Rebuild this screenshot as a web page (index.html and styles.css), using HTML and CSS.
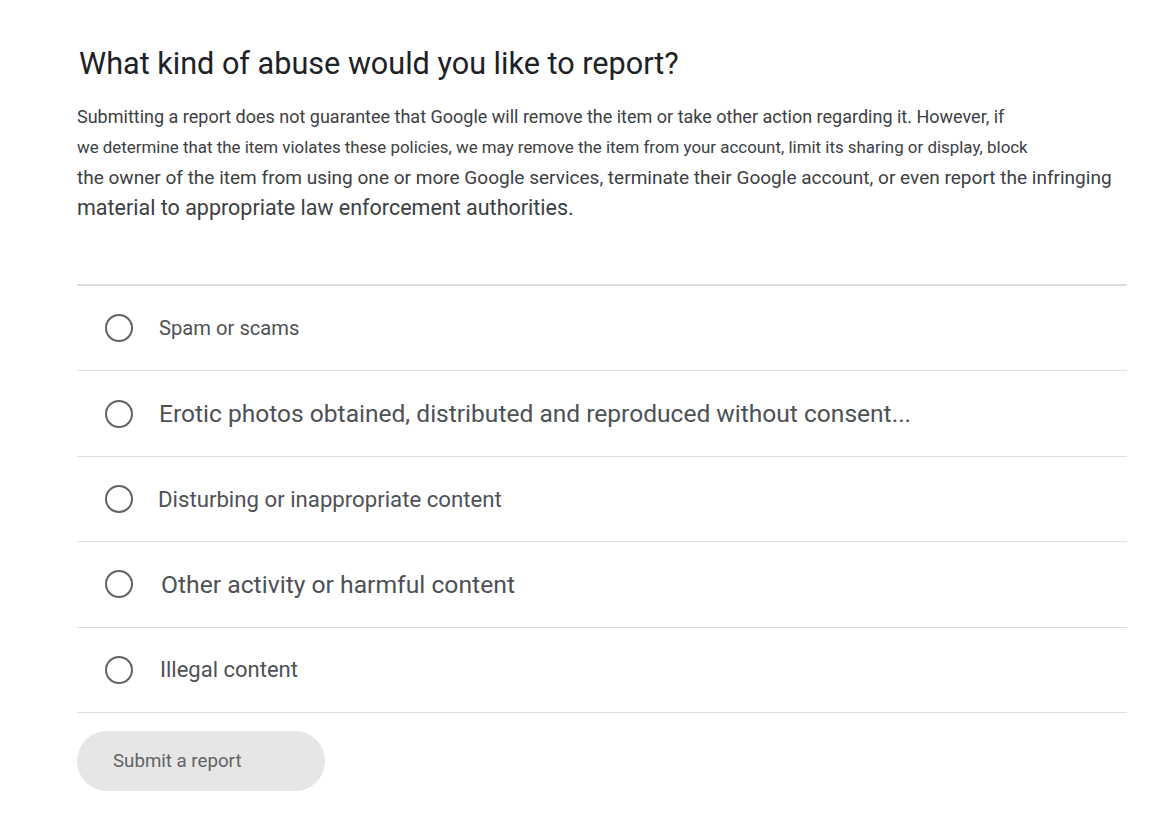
FILE: index.html
```html
<!DOCTYPE html>
<html lang="en">
<head>
<meta charset="utf-8">
<title>Report abuse</title>
<link rel="stylesheet" href="styles.css">
</head>
<body>
<main class="page">
  <h1 class="title">What kind of abuse would you like to report?</h1>
  <div class="intro">
    <p class="line l1">Submitting a report does not guarantee that Google will remove the item or take other action regarding it. However, if</p>
    <p class="line l2">we determine that the item violates these policies, we may remove the item from your account, limit its sharing or display, block</p>
    <p class="line l3">the owner of the item from using one or more Google services, terminate their Google account, or even report the infringing</p>
    <p class="line l4">material to appropriate law enforcement authorities.</p>
  </div>
  <ul class="options">
    <li class="option"><span class="radio"></span><span class="label o1">Spam or scams</span></li>
    <li class="option"><span class="radio"></span><span class="label o2">Erotic photos obtained, distributed and reproduced without consent...</span></li>
    <li class="option"><span class="radio"></span><span class="label o3">Disturbing or inappropriate content</span></li>
    <li class="option"><span class="radio"></span><span class="label o4">Other activity or harmful content</span></li>
    <li class="option"><span class="radio"></span><span class="label o5">Illegal content</span></li>
  </ul>
  <button class="submit" type="button">Submit a report</button>
</main>
</body>
</html>
```
FILE: styles.css
```css
html, body {
  margin: 0;
  padding: 0;
  background: #ffffff;
}
body {
  font-family: Roboto, "Noto Sans", Arial, sans-serif;
  color: #3c4043;
}
.page {
  width: 1050px;
  padding: 44px 0 0 77px;
}
.title {
  margin: 0 0 0 2px;
  font-size: 30.6px;
  font-weight: 400;
  line-height: 40px;
  color: #202124;
}
.intro {
  margin-top: 17px;
}
.line {
  margin: 0;
  height: 30.5px;
  display: flex;
  align-items: center;
  white-space: nowrap;
  color: #3c4043;
}
.l1 { font-size: 18px; }
.l2 { font-size: 16.9px; }
.l3 { font-size: 19.05px; }
.l4 { font-size: 21.5px; }
.options {
  list-style: none;
  margin: 61px 0 0 0;
  padding: 0;
  border-top: 2px solid #dddddd;
}
.option {
  height: 84.4px;
  display: flex;
  align-items: center;
  border-bottom: 1px solid #dfdfdf;
}
.radio {
  width: 24px;
  height: 24px;
  border: 2.5px solid #5f6368;
  border-radius: 50%;
  margin-left: 27.5px;
  flex: none;
}
.label {
  color: #4d5156;
  white-space: nowrap;
}
.o1 { font-size: 20.2px; margin-left: 26.5px; }
.o2 { font-size: 24.55px; margin-left: 26.5px; }
.o3 { font-size: 22.2px; margin-left: 25.5px; }
.o4 { font-size: 24.7px; margin-left: 28.5px; }
.o5 { font-size: 22px; margin-left: 27.5px; }
.submit {
  display: block;
  margin-top: 18px;
  width: 248px;
  height: 60px;
  border: none;
  border-radius: 30px;
  background: #e6e6e6;
  color: #5f6368;
  font-family: Roboto, "Noto Sans", Arial, sans-serif;
  font-size: 18.7px;
  text-align: left;
  padding: 0 0 0 36px;
}
```
